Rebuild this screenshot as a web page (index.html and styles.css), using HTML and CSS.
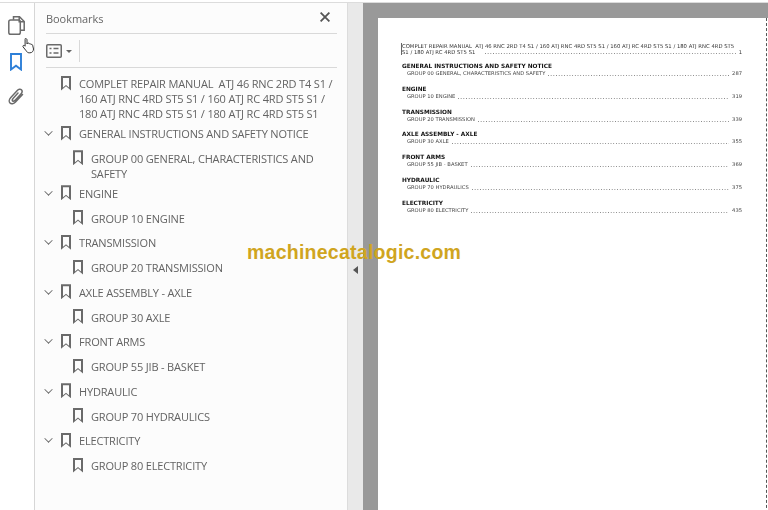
FILE: index.html
```html
<!DOCTYPE html>
<html lang="en">
<head>
<meta charset="utf-8">
<title>Bookmarks</title>
<link rel="stylesheet" href="styles.css">
</head>
<body>
<div class="app">
  <nav class="rail">
    <svg class="rail-icon" width="17" height="19" viewBox="0 0 17 19" fill="none" stroke="#6b6b6b" stroke-width="1.500"><path d="M5.500 3.800V.8h6l4.700 4.700v8.700h-3.800"/><path d="M11.200.8v5h5"/><rect x=".8" y="3.900" width="11.500" height="14.300" rx="1.800"/></svg>
    <svg class="rail-icon rail-icon-blue" width="12" height="18" viewBox="0 0 12 18" fill="none" stroke="#2d7fd8" stroke-width="1.900"><path d="M1 1h10v15.500l-5-3.800-5 3.800z"/></svg>
    <svg class="rail-icon rail-icon-clip" width="16" height="17" viewBox="0 0 16 17" fill="none" stroke="#6b6b6b" stroke-width="1.500" stroke-linecap="round"><path d="M14.500 6.500l-7 7.500c-1.800 1.900-4.300 2.200-5.500 1s-1-3.600.8-5.500l6.500-7c1.300-1.400 3.100-1.700 4.100-.7s.8 2.700-.5 4.100l-6 6.500c-.8.800-1.800 1-2.300.5s-.4-1.500.4-2.300l5-5.500"/></svg>
  </nav>
  <aside class="panel">
    <header class="panel-head">
      <span class="panel-title">Bookmarks</span>
      <svg class="close" width="10" height="10" viewBox="0 0 10 10" stroke="#555" stroke-width="1.800"><path d="M.600.600l8.800 8.800M9.400.600L.600 9.400"/></svg>
    </header>
    <div class="toolbar">
      <svg width="16" height="14" viewBox="0 0 16 14" fill="none" stroke="#6a6a6a"><rect x=".75" y=".75" width="14.500" height="12.500" rx="1" stroke-width="1.500"/><path d="M3.500 4.500h2M3.500 9h2M7.500 4.500h5M7.500 9h5" stroke-width="1.700"/></svg>
      <span class="caret"></span>
      <span class="tool-sep"></span>
    </div>
    <ul class="tree">
      <li class="row lvl0 wrap"><span class="mark"></span><span class="label">COMPLET REPAIR MANUAL&nbsp; ATJ 46 RNC 2RD T4 S1 / 160 ATJ RNC 4RD ST5 S1 / 160 ATJ RC 4RD ST5 S1 / 180 ATJ RNC 4RD ST5 S1 / 180 ATJ RC 4RD ST5 S1</span></li>
      <li class="row lvl0"><span class="chev"></span><span class="mark"></span><span class="label">GENERAL INSTRUCTIONS AND SAFETY NOTICE</span></li>
      <li class="row lvl1 wrap"><span class="mark"></span><span class="label">GROUP 00 GENERAL, CHARACTERISTICS AND SAFETY</span></li>
      <li class="row lvl0"><span class="chev"></span><span class="mark"></span><span class="label">ENGINE</span></li>
      <li class="row lvl1"><span class="mark"></span><span class="label">GROUP 10 ENGINE</span></li>
      <li class="row lvl0"><span class="chev"></span><span class="mark"></span><span class="label">TRANSMISSION</span></li>
      <li class="row lvl1"><span class="mark"></span><span class="label">GROUP 20 TRANSMISSION</span></li>
      <li class="row lvl0"><span class="chev"></span><span class="mark"></span><span class="label">AXLE ASSEMBLY - AXLE</span></li>
      <li class="row lvl1"><span class="mark"></span><span class="label">GROUP 30 AXLE</span></li>
      <li class="row lvl0"><span class="chev"></span><span class="mark"></span><span class="label">FRONT ARMS</span></li>
      <li class="row lvl1"><span class="mark"></span><span class="label">GROUP 55 JIB - BASKET</span></li>
      <li class="row lvl0"><span class="chev"></span><span class="mark"></span><span class="label">HYDRAULIC</span></li>
      <li class="row lvl1"><span class="mark"></span><span class="label">GROUP 70 HYDRAULICS</span></li>
      <li class="row lvl0"><span class="chev"></span><span class="mark"></span><span class="label">ELECTRICITY</span></li>
      <li class="row lvl1"><span class="mark"></span><span class="label">GROUP 80 ELECTRICITY</span></li>
    </ul>
  </aside>
  <div class="splitter"><span class="split-arrow"></span></div>
  <main class="viewer">
    <article class="page">
      <div class="toc-first"><span class="toc-first-text">COMPLET REPAIR MANUAL&nbsp; ATJ 46 RNC 2RD T4 S1 / 160 ATJ RNC 4RD ST5 S1 / 160 ATJ RC 4RD ST5 S1 / 180 ATJ RNC 4RD ST5<br>S1 / 180 ATJ RC 4RD ST5 S1</span><span class="dots"></span><span class="num">1</span></div>
      <section class="toc-sec"><h2>GENERAL INSTRUCTIONS AND SAFETY NOTICE</h2><div class="toc-line"><span>GROUP 00 GENERAL, CHARACTERISTICS AND SAFETY</span><span class="dots"></span><span class="num">287</span></div></section>
      <section class="toc-sec"><h2>ENGINE</h2><div class="toc-line"><span>GROUP 10 ENGINE</span><span class="dots"></span><span class="num">319</span></div></section>
      <section class="toc-sec"><h2>TRANSMISSION</h2><div class="toc-line"><span>GROUP 20 TRANSMISSION</span><span class="dots"></span><span class="num">339</span></div></section>
      <section class="toc-sec"><h2>AXLE ASSEMBLY - AXLE</h2><div class="toc-line"><span>GROUP 30 AXLE</span><span class="dots"></span><span class="num">355</span></div></section>
      <section class="toc-sec"><h2>FRONT ARMS</h2><div class="toc-line"><span>GROUP 55 JIB - BASKET</span><span class="dots"></span><span class="num">369</span></div></section>
      <section class="toc-sec"><h2>HYDRAULIC</h2><div class="toc-line"><span>GROUP 70 HYDRAULICS</span><span class="dots"></span><span class="num">375</span></div></section>
      <section class="toc-sec"><h2>ELECTRICITY</h2><div class="toc-line"><span>GROUP 80 ELECTRICITY</span><span class="dots"></span><span class="num">435</span></div></section>
    </article>
  </main>
</div>
<div class="watermark">machinecatalogic.com</div>
<svg class="cursor" width="14" height="17" viewBox="0 0 14 17"><path d="M3.500 1.500c1 0 1.500.7 1.500 1.500v4l.5-.8c1-.4 1.500 0 1.700.7.800-.5 1.500-.2 1.800.6.800-.3 1.500 0 1.700.9l.8 3.600c0 2.200-1.500 3.800-3.500 3.800H7.200c-1.500 0-2.300-.8-3-2L1 9.800c-.4-1 .5-1.800 1.500-1.200l.6.600V3c0-.8-.1-1.500.4-1.500z" fill="#fff" stroke="#333" stroke-width="1"/></svg>
</body>
</html>
```
FILE: styles.css
```css
* { box-sizing: border-box; }
html, body { margin: 0; padding: 0; width: 768px; height: 510px; overflow: hidden; background: #fff; }
body { font-family: "Open Sans", "Noto Sans", sans-serif; position: relative; }
.app { display: flex; width: 768px; height: 510px; padding-top: 3px; background: linear-gradient(#fff 2px, #dcdcdc 2px, #dcdcdc 3px, #fff 3px); filter: blur(.3px); }
.rail { width: 35px; flex: none; background: #fff; border-right: 1px solid #d6d6d6; display: flex; flex-direction: column; align-items: center; padding: 13px 2px 0 0; }
.rail-icon { display: block; }
.rail-icon-blue { margin-top: 18px; }
.rail-icon-clip { margin-top: 17px; }
.panel { width: 312px; flex: none; background: #fcfcfc; padding: 0 10px 0 11px; }
.panel-head { display: flex; align-items: center; justify-content: space-between; height: 31px; padding-right: 7px; border-bottom: 1px solid #d9d9d9; }
.panel-title { font-size: 11px; letter-spacing: -.05px; color: #666; }
.close { margin-top: -2px; }
.toolbar { display: flex; align-items: center; height: 34px; border-bottom: 1px solid #d9d9d9; }
.caret { margin-left: 4px; margin-top: 2px; border-left: 3px solid transparent; border-right: 3px solid transparent; border-top: 3px solid #666; }
.tool-sep { width: 1px; height: 22px; background: #d9d9d9; margin-left: 7px; }
.tree { list-style: none; margin: 0; padding: 3px 0 0; }
.row { position: relative; display: flex; align-items: flex-start; padding: 5px 0 4.750px; font-size: 11px; letter-spacing: -.17px; line-height: 15px; color: #636363; }
.wrap { padding-bottom: 0; }
.lvl0 { padding-left: 33px; }
.lvl1 { padding-left: 45px; }
.label { display: block; flex: 1; }
.mark { position: absolute; top: 4.500px; width: 10px; height: 15px; background: #6a6a6a; clip-path: polygon(0 0, 100% 0, 100% 100%, 50% 72%, 0 100%); }
.mark::after { content: ""; position: absolute; left: 2px; top: 2px; width: 6px; height: 10px; background: #fcfcfc; clip-path: polygon(0 0, 100% 0, 100% 100%, 50% 74%, 0 100%); }
.lvl0 .mark { left: 15px; }
.lvl1 .mark { left: 27px; }
.chev { position: absolute; left: -1px; top: 7px; width: 7px; height: 7px; border-right: 1.500px solid #666; border-bottom: 1.500px solid #666; transform: rotate(45deg) scale(.85); }
.splitter { width: 16px; flex: none; background: #e9e9e9; border-left: 1px solid #dcdcdc; display: flex; align-items: center; justify-content: center; }
.split-arrow { margin-top: 27px; border-top: 4px solid transparent; border-bottom: 4px solid transparent; border-right: 5px solid #555; }
.viewer { flex: 1; background: #999; padding: 15px 0 0 15px; }
.page { height: 500px; background: #fff; border-right: 1px dashed #555; box-shadow: 1px 0 #fff; margin-right: 1px; padding: 25px 24px 0 24px; font-family: "DejaVu Sans", sans-serif; color: #333; }
.toc-first { display: flex; align-items: flex-end; font-size: 5.300px; line-height: 6px; }
.toc-first-text { white-space: nowrap; margin-right: -252px; box-shadow: -1px 0 #666; }
.toc-first .dots { margin-left: 3px; }
.toc-sec { margin-top: 7.750px; }
.toc-first + .toc-sec { margin-top: 7px; }
.toc-sec h2 { margin: 0; font-size: 5.800px; line-height: 8px; font-weight: bold; color: #111; }
.toc-line { display: flex; align-items: flex-end; padding-left: 5px; font-size: 5.200px; line-height: 7px; color: #444; }
.dots { flex: 1; margin: 0 3px 1px; height: 1px; background: linear-gradient(90deg, #888 1px, transparent 1px) 0 0 / 2.700px 1px repeat-x; }
.num { flex: none; }
.watermark { position: absolute; left: 247px; top: 241px; font-family: "Liberation Sans", sans-serif; font-size: 19.500px; font-weight: bold; line-height: 22px; color: #d0a51f; letter-spacing: .25px; white-space: nowrap; }
.cursor { position: absolute; left: 22px; top: 37px; }
```
